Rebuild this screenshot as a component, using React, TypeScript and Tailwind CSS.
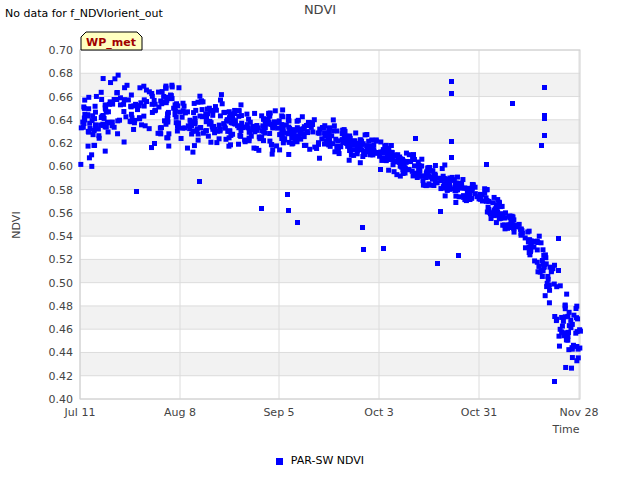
import React from "react";

function rng(seed: number) {
  let s = seed;
  return () => {
    s = (s * 1664525 + 1013904223) % 4294967296;
    return s / 4294967296;
  };
}

const X0 = 80, X1 = 580, Y0 = 50, Y1 = 399;
const xp = (d: number) => X0 + (d / 140) * (X1 - X0);
const yp = (v: number) => Y1 - ((v - 0.4) / 0.3) * (Y1 - Y0);

const trend: [number, number, number][] = [
  [0, 0.635, 0.028], [15, 0.65, 0.022], [25, 0.648, 0.02], [30, 0.64, 0.018],
  [56, 0.633, 0.014], [70, 0.625, 0.01], [84, 0.613, 0.008], [95, 0.597, 0.008],
  [105, 0.585, 0.01], [112, 0.574, 0.008], [120, 0.552, 0.008], [125, 0.54, 0.01],
  [130, 0.515, 0.02], [133, 0.48, 0.02], [137, 0.455, 0.02], [140, 0.455, 0.02],
];
function interp(d: number) {
  for (let i = 0; i < trend.length - 1; i++) {
    const a = trend[i], b = trend[i + 1];
    if (d >= a[0] && d <= b[0]) {
      const t = (d - a[0]) / (b[0] - a[0]);
      return [a[1] + (b[1] - a[1]) * t, a[2] + (b[2] - a[2]) * t];
    }
  }
  return [0.45, 0.02];
}

const pts: [number, number][] = (() => {
  const r = rng(7);
  const out: [number, number][] = [];
  for (let i = 0; i < 950; i++) {
    const d = r() * 140;
    const [m, s] = interp(d);
    const v = m + (r() + r() + r() - 1.5) * s * 1.3;
    out.push([xp(d), yp(v)]);
  }
  const outl: [number, number][] = [
    [136, 191], [199, 181], [261, 208], [287, 194], [288, 210], [297, 222], [362, 227],
    [363, 249], [383, 248], [380, 169], [415, 138], [437, 263], [440, 211], [451, 81],
    [451, 93], [451, 141], [451, 157], [458, 255], [486, 164], [512, 103], [544, 87],
    [544, 115], [544, 118], [544, 135], [541, 145], [554, 381], [558, 238], [558, 270],
  ];
  outl.forEach((p) => out.push(p));
  return out;
})();

const yTicks = Array.from({ length: 16 }, (_, i) => 0.4 + i * 0.02);
const xTicks: [string, number][] = [
  ["Jul 11", 80], ["Aug 8", 180], ["Sep 5", 279], ["Oct 3", 379], ["Oct 31", 479], ["Nov 28", 579],
];

export default function App() {
  return (
    <div className="w-[640px] h-[480px] bg-white flex flex-col" style={{ fontFamily: "'DejaVu Sans', sans-serif" }}>
      <div className="h-[22px] grid grid-cols-3 items-start">
        <div className="text-[11px] text-black pl-[5px] pt-[7px] leading-[14px] whitespace-nowrap">No data for f_NDVIorient_out</div>
        <div className="text-[13px] text-[#444] text-center pt-[2px] leading-[16px]">NDVI</div>
        <div />
      </div>
      <svg width="640" height="428" viewBox="0 22 640 428" className="block">
        {Array.from({ length: 15 }, (_, i) => (
          <rect key={i} x={X0} y={Y0 + (i * (Y1 - Y0)) / 15} width={X1 - X0}
            height={(Y1 - Y0) / 15} fill={i % 2 === 1 ? "#f2f2f2" : "#ffffff"} />
        ))}
        {yTicks.map((v) => (
          <line key={v} x1={X0} x2={X1} y1={yp(v)} y2={yp(v)} stroke="#dcdcdc" strokeWidth="1" />
        ))}
        {xTicks.map(([, x]) => (
          <line key={x} x1={x} x2={x} y1={Y0} y2={Y1} stroke="#dcdcdc" strokeWidth="1" />
        ))}
        <rect x={X0} y={Y0} width={X1 - X0} height={Y1 - Y0} fill="none" stroke="#d0d0d0" />
        {pts.map(([x, y], i) => (
          <rect key={i} x={x - 2} y={y - 2} width="5" height="5" fill="#0000ff" />
        ))}
        {yTicks.map((v) => (
          <text key={v} x={73} y={yp(v) + 4} fontSize="11" fill="#444" textAnchor="end">{v.toFixed(2)}</text>
        ))}
        {xTicks.map(([l, x]) => (
          <text key={l} x={x} y={416} fontSize="11" fill="#444" textAnchor="middle">{l}</text>
        ))}
        <text x={566} y={433} fontSize="11" fill="#444" textAnchor="middle">Time</text>
        <text x={20} y={225} fontSize="11" fill="#444" textAnchor="middle" transform="rotate(-90 20 225)">NDVI</text>
        <path d="M81 50 V37 L86 32 H137 L142 37 V50 Z" fill="#ffffc0" stroke="#000" strokeWidth="1" />
        <text x={111} y={46} fontSize="11" fontWeight="bold" fill="#a00000" textAnchor="middle">WP_met</text>
      </svg>
      <div className="flex items-center justify-center gap-[8px] h-[22px]">
        <div className="w-[7px] h-[7px] bg-[#0000ff]" />
        <span className="text-[11px] text-black leading-[14px]">PAR-SW NDVI</span>
      </div>
    </div>
  );
}
